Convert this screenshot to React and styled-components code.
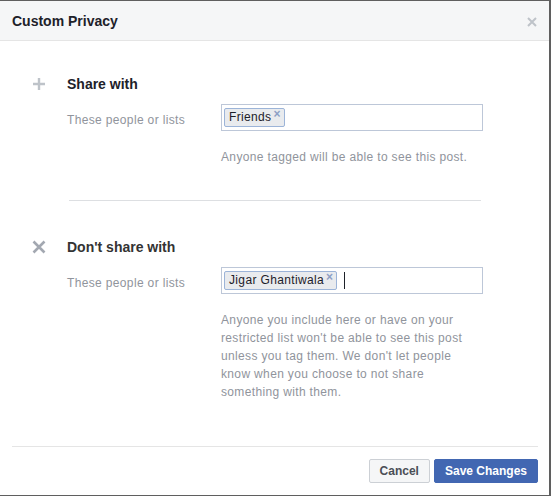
import React from "react";
import styled, { createGlobalStyle } from "styled-components";

const GlobalStyle = createGlobalStyle`
  body {
    margin: 0;
    background: #ffffff;
    font-family: "Liberation Sans", Arial, sans-serif;
  }
`;

function PlusIcon() {
  return (
    <svg width="14" height="14" viewBox="0 0 14 14">
      <path d="M7 1v12M1 7h12" stroke="#bec3c9" strokeWidth="2.4" />
    </svg>
  );
}

function CrossIcon() {
  return (
    <svg width="14" height="14" viewBox="0 0 14 14">
      <path d="M1.5 1.5l11 11M12.5 1.5l-11 11" stroke="#a3a8b1" strokeWidth="2.6" />
    </svg>
  );
}

function CloseIcon() {
  return (
    <svg width="10" height="10" viewBox="0 0 10 10">
      <path d="M1 1l8 8M9 1l-8 8" stroke="#bec3c9" strokeWidth="2" />
    </svg>
  );
}

function Token({ label }) {
  return (
    <Chip>
      {label}
      <ChipRemove>×</ChipRemove>
    </Chip>
  );
}

function App() {
  return (
    <>
      <GlobalStyle />
      <Dialog>
        <Header>
          <Title>Custom Privacy</Title>
          <Close>
            <CloseIcon />
          </Close>
        </Header>
        <Body>
          <Section>
            <IconCell>
              <PlusIcon />
            </IconCell>
            <Heading>Share with</Heading>
            <Label>These people or lists</Label>
            <TokenInput>
              <Token label="Friends" />
            </TokenInput>
            <Helper>Anyone tagged will be able to see this post.</Helper>
          </Section>

          <Divider />

          <Section>
            <IconCell>
              <CrossIcon />
            </IconCell>
            <Heading dark>Don't share with</Heading>
            <Label>These people or lists</Label>
            <TokenInput>
              <Token label="Jigar Ghantiwala" />
              <Caret />
            </TokenInput>
            <Helper>
              Anyone you include here or have on your restricted list won't be
              able to see this post unless you tag them. We don't let people
              know when you choose to not share something with them.
            </Helper>
          </Section>
        </Body>
        <Footer>
          <Button>Cancel</Button>
          <Button primary>Save Changes</Button>
        </Footer>
      </Dialog>
    </>
  );
}

//styles

const Dialog = styled.div`
  width: 549px;
  height: 494px;
  border-top: 1px solid #5f5f5f;
  border-right: 2px solid #5f5f5f;
  border-bottom: 2px solid #5f5f5f;
  background: #ffffff;
  display: flex;
  flex-direction: column;
`;

const Header = styled.div`
  height: 39px;
  background: #f5f6f7;
  border-bottom: 1px solid #e5e5e5;
  display: flex;
  align-items: center;
  justify-content: space-between;
  padding: 0 12px;
`;

const Title = styled.div`
  font-size: 14px;
  font-weight: bold;
  color: #1d2129;
`;

const Close = styled.div`
  display: flex;
  margin-top: 2px;
`;

const Body = styled.div`
  flex: 1;
  padding: 34px 0 0 32px;
`;

const Section = styled.div`
  display: grid;
  grid-template-columns: 35px 154px 262px;
  grid-template-rows: 18px auto auto;
`;

const IconCell = styled.div`
  display: flex;
  align-items: center;
  height: 18px;
`;

const Heading = styled.div`
  grid-column: 2 / 4;
  font-size: 14px;
  line-height: 18px;
  font-weight: bold;
  color: ${(props) => (props.dark ? "#333333" : "#1d2129")};
`;

const Label = styled.div`
  grid-column: 2;
  margin-top: 11px;
  padding-top: 8px;
  font-size: 12px;
  line-height: 16px;
  letter-spacing: 0.35px;
  color: #90949c;
`;

const TokenInput = styled.div`
  grid-column: 3;
  margin-top: 11px;
  height: 27px;
  box-sizing: border-box;
  border: 1px solid #bdc7d8;
  display: flex;
  align-items: center;
  padding: 0 2px;
  gap: 7px;
`;

const Chip = styled.span`
  display: inline-flex;
  align-items: flex-start;
  height: 19px;
  box-sizing: border-box;
  padding: 0 3px 0 4px;
  background: #e9ebee;
  border: 1px solid #9cb4d8;
  border-radius: 2px;
  font-size: 12px;
  line-height: 17px;
  letter-spacing: 0.35px;
  color: #1d2129;
`;

const ChipRemove = styled.span`
  font-size: 12px;
  line-height: 11px;
  margin-left: 2px;
  color: #8d9fc5;
  font-weight: bold;
`;

const Caret = styled.span`
  width: 1px;
  height: 17px;
  background: #1d2129;
`;

const Helper = styled.div`
  grid-column: 3;
  margin-top: 17px;
  width: 250px;
  font-size: 12px;
  line-height: 18px;
  letter-spacing: 0.35px;
  color: #90949c;
`;

const Divider = styled.div`
  margin: 34px 0 37px 37px;
  width: 412px;
  height: 1px;
  background: #dddfe2;
`;

const Footer = styled.div`
  margin: 0 11px 12px 12px;
  border-top: 1px solid #e5e5e5;
  padding-top: 12px;
  display: flex;
  justify-content: flex-end;
  gap: 4px;
`;

const Button = styled.button`
  height: 24px;
  padding: 0 10px;
  border-radius: 2px;
  font-family: "Liberation Sans", Arial, sans-serif;
  font-size: 12px;
  font-weight: bold;
  border: 1px solid ${(props) => (props.primary ? "#4267b2" : "#ccd0d5")};
  background: ${(props) => (props.primary ? "#4267b2" : "#f5f6f7")};
  color: ${(props) => (props.primary ? "#ffffff" : "#4b4f56")};
`;

export default App;
